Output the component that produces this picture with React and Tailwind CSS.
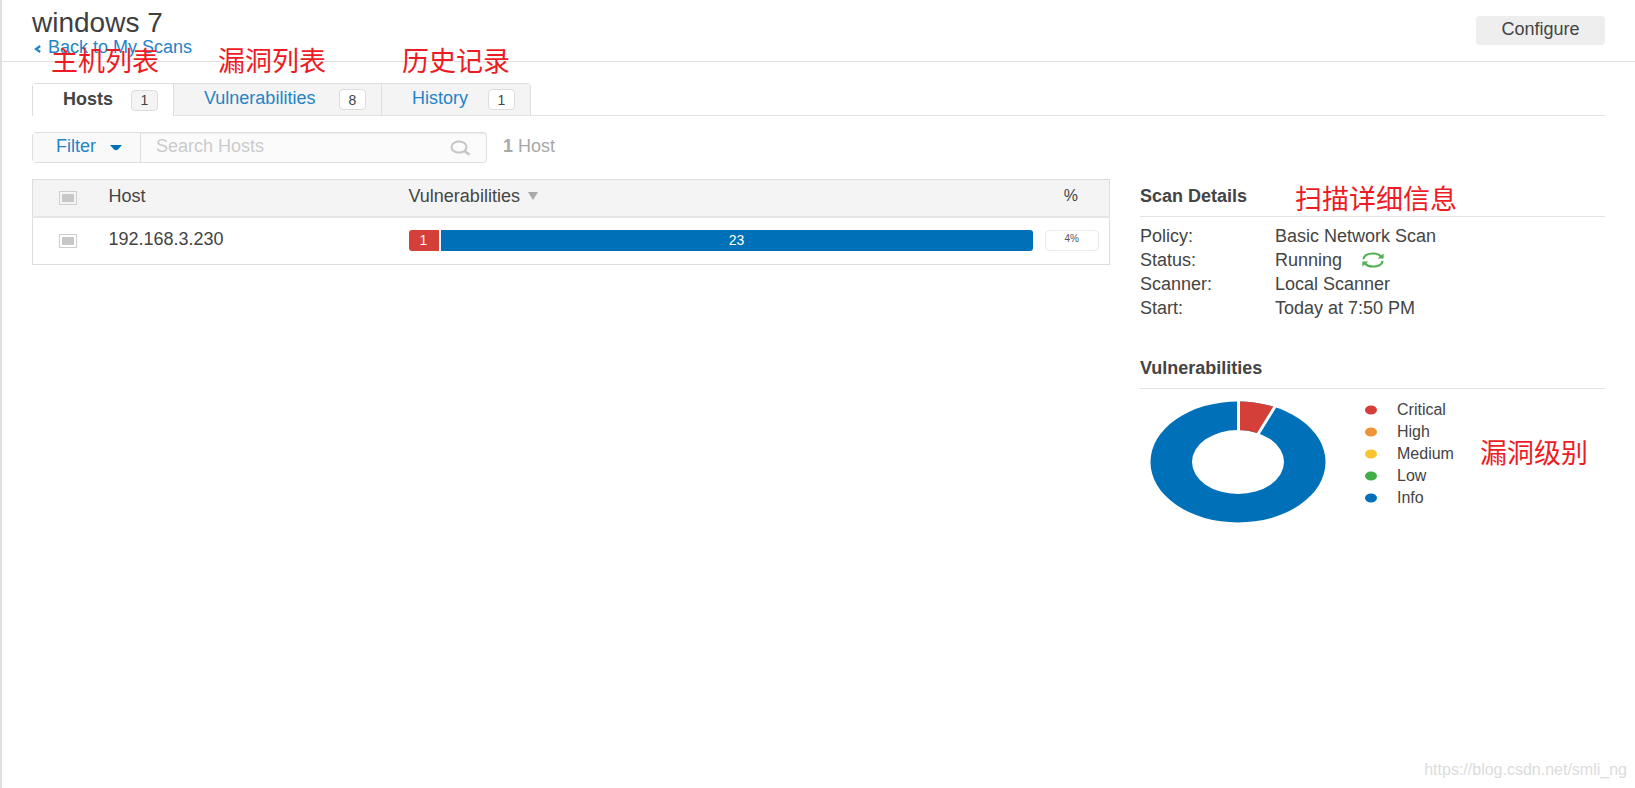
const tabs = [
  { label: 'Hosts', count: 1, active: true, width: 'w-[140px]', note: '主机列表', notePos: 'left-[18px] -top-[40px]' },
  { label: 'Vulnerabilities', count: 8, active: false, width: 'w-[207px]', note: '漏洞列表', notePos: 'left-[44px] -top-[40px]' },
  { label: 'History', count: 1, active: false, width: 'w-[148px]', note: '历史记录', notePos: 'left-[20px] -top-[40px]' },
];

const severities = [
  { label: 'Critical', fill: '#d43f3a' },
  { label: 'High', fill: '#ee9336' },
  { label: 'Medium', fill: '#fdc431' },
  { label: 'Low', fill: '#3fae49' },
  { label: 'Info', fill: '#0071b9' },
];

function Note({ className, children }) {
  return (
    <span
      className={`pointer-events-none absolute z-10 whitespace-nowrap font-['Noto_Sans_CJK_SC',sans-serif] text-[27px] leading-8 font-normal text-[#ed1c24] ${className}`}
    >
      {children}
    </span>
  );
}

function Checkbox({ label }) {
  return (
    <input
      type="checkbox"
      aria-label={label}
      className="block h-[14px] w-[18px] appearance-none border border-[#cfcfcf] bg-[#c8c8c8] bg-clip-content p-[2px]"
    />
  );
}

function RunningIcon() {
  return (
    <svg className="h-4 w-[22px]" viewBox="0 0 22 16" fill="none" stroke="#4caf50" strokeWidth="2.200" aria-hidden="true">
      <path d="M1.400 7.200C1.800 3.600 5.800 1.500 10.800 1.500c3.600 0 6.800 1.200 8.200 3.200" />
      <path d="M20.600 8.800C20.200 12.400 16.200 14.500 11.200 14.500c-3.600 0-6.800-1.200-8.200-3.200" />
      <path d="M21.600 1.400v5h-6z" fill="#4caf50" stroke="none" />
      <path d="M.4 14.600v-5h6z" fill="#4caf50" stroke="none" />
    </svg>
  );
}

function Donut() {
  return (
    <svg className="h-[122px] w-[176px]" viewBox="0 0 176 122" role="img" aria-label="Vulnerabilities by severity">
      <path
        fillRule="evenodd"
        fill="#0071b9"
        d="M88 .5a87.500 60.500 0 1 0 0 121a87.500 60.500 0 1 0 0-121zM88 29a46 32 0 1 1 0 64a46 32 0 1 1 0-64z"
      />
      <path fill="#d43f3a" d="M88 .5A87.500 60.500 0 0 1 125 6.200L108 32.300A46 32 0 0 0 88 29z" />
      <path d="M88.500 0V30" stroke="#fff" strokeWidth="3" />
      <path d="M126 4L107.500 34" stroke="#fff" strokeWidth="3" />
    </svg>
  );
}

export default function App() {
  return (
    <div className="relative min-h-screen border-l-2 border-[#e0e0e0] bg-white font-['Liberation_Sans','Noto_Sans_CJK_SC',sans-serif] text-lg leading-6 text-[#444]">
      <header className="flex h-[62px] items-start justify-between border-b border-[#e0e0e0] px-[30px]">
        <div className="pt-[7px]">
          <h1 className="text-[28px] leading-8 text-[#3f3f3f]">windows 7</h1>
          <a href="#scans" className="flex items-center gap-[6px] leading-4 text-[#2484c6]">
            <svg className="mt-[3px] ml-[2px] h-2 w-2" viewBox="0 0 8 8" fill="none" stroke="#2484c6" strokeWidth="2.200" aria-hidden="true">
              <path d="M6.200 1L2 4l4.200 3" />
            </svg>
            Back to My Scans
          </a>
        </div>
        <button type="button" className="mt-4 h-[29px] w-[129px] rounded bg-[#eee] pb-[3px] leading-6">
          Configure
        </button>
      </header>

      <div className="px-[30px] pt-[21px]">
        <nav className="flex border-b border-[#e3e3e3]">
          <div className="-mb-px flex rounded-t border border-b-0 border-[#dedede]">
            {tabs.map((t) => (
              <div key={t.label} className="relative flex border-l border-[#dedede] first:border-l-0">
                <a
                  href={`#${t.label.toLowerCase()}`}
                  className={`flex h-8 items-center justify-between pr-[15px] pl-[30px] ${t.width} ${
                    t.active ? 'bg-white font-bold' : 'border-b border-[#e3e3e3] bg-[#f4f4f4] text-[#2484c6]'
                  }`}
                >
                  <span className="pb-[3px]">{t.label}</span>
                  <span
                    className={`flex h-[21px] w-[27px] items-center justify-center rounded border border-[#dcdcdc] text-sm font-normal text-[#444] ${
                      t.active ? 'bg-[#f4f4f4]' : 'bg-white'
                    }`}
                  >
                    {t.count}
                  </span>
                </a>
                <Note className={t.notePos}>{t.note}</Note>
              </div>
            ))}
          </div>
        </nav>

        <div className="mt-4 flex items-center gap-4">
          <div className="flex h-[31px] w-[455px] rounded border border-[#dedede] bg-[#fbfbfb]">
            <button type="button" className="flex w-[108px] items-center gap-[14px] border-r border-[#dedede] bg-[#f9f9f9] pb-[3px] pl-[23px] text-[#2484c6]">
              Filter
              <svg className="mt-1 h-[6px] w-[12px]" viewBox="0 0 12 6" aria-hidden="true">
                <path d="M0 0h12L8 4.600Q6 6 4 4.600z" fill="#0071b9" />
              </svg>
            </button>
            <div className="flex flex-1 items-center px-[15px] shadow-[inset_0_1px_2px_rgba(0,0,0,0.06)]">
              <input
                type="text"
                aria-label="Search Hosts"
                placeholder="Search Hosts"
                className="min-w-0 flex-1 bg-transparent pb-[3px] outline-none placeholder:text-[#cbcbcb]"
              />
              <svg className="h-4 w-[21px]" viewBox="0 0 21 16" fill="none" stroke="#c4c4c4" strokeWidth="2" aria-hidden="true">
                <ellipse cx="9" cy="7" rx="7.500" ry="5.600" />
                <path d="M14.500 11l5 3.800" strokeWidth="2.600" />
              </svg>
            </div>
          </div>
          <p className="pb-[3px] text-[#a8a8a8]">
            <b>1</b> Host
          </p>
        </div>

        <div className="mt-4 flex items-start gap-[30px]">
          <table className="min-w-0 flex-1 table-fixed border-collapse border border-[#dedede]">
            <colgroup>
              <col className="w-[76px]" />
              <col className="w-[300px]" />
              <col />
              <col className="w-[77px]" />
            </colgroup>
            <thead className="bg-[#f4f4f4] text-left">
              <tr className="h-[37px] border-b-2 border-[#e6e6e6]">
                <th className="pl-[26px]">
                  <Checkbox label="Select all hosts" />
                </th>
                <th className="pb-1 font-normal">Host</th>
                <th className="pb-1 font-normal">
                  <span className="flex items-center gap-2">
                    Vulnerabilities
                    <svg className="h-2 w-[10px]" viewBox="0 0 10 8" aria-hidden="true">
                      <path d="M0 0h10L5 8z" fill="#aaa" />
                    </svg>
                  </span>
                </th>
                <th className="pb-1 text-center text-base font-normal">%</th>
              </tr>
            </thead>
            <tbody>
              <tr className="h-[48px]">
                <td className="pl-[26px]">
                  <Checkbox label="Select 192.168.3.230" />
                </td>
                <td className="pb-[3px]">192.168.3.230</td>
                <td>
                  <div className="flex gap-[2px] text-center text-sm leading-[21px] text-white">
                    <span className="w-[30px] rounded-l-[3px] bg-[#d43f3a]">1</span>
                    <span className="flex-1 rounded-r-[3px] bg-[#0071b9]">23</span>
                  </div>
                </td>
                <td className="pr-[10px] pl-[12px]">
                  <div className="h-[21px] rounded border border-[#ebebeb] text-center text-[10px] leading-4 text-[#555]">4%</div>
                </td>
              </tr>
            </tbody>
          </table>

          <aside className="w-[465px]">
            <section className="relative">
              <h2 className="border-b border-[#e3e3e3] pt-[5px] pb-[8px] leading-6 font-bold">Scan Details</h2>
              <Note className="top-[3px] left-[155px]">扫描详细信息</Note>
              <dl className="mt-[7px] grid grid-cols-[135px_1fr]">
                <dt>Policy:</dt>
                <dd>Basic Network Scan</dd>
                <dt>Status:</dt>
                <dd className="flex items-center gap-[20px]">
                  Running
                  <RunningIcon />
                </dd>
                <dt>Scanner:</dt>
                <dd>Local Scanner</dd>
                <dt>Start:</dt>
                <dd>Today at 7:50 PM</dd>
              </dl>
            </section>

            <section className="relative mt-[36px]">
              <h2 className="border-b border-[#e3e3e3] pb-[8px] leading-6 font-bold">Vulnerabilities</h2>
              <div className="flex items-start gap-[39px] pt-[12px] pl-[10px]">
                <Donut />
                <ul className="-mt-[2px] text-base leading-[22px]">
                  {severities.map((s) => (
                    <li key={s.label} className="flex items-center gap-[20px]">
                      <svg className="h-[10px] w-[12px]" viewBox="0 0 12 10" aria-hidden="true">
                        <ellipse cx="6" cy="5" rx="6" ry="4.600" fill={s.fill} />
                      </svg>
                      {s.label}
                    </li>
                  ))}
                </ul>
              </div>
              <Note className="top-[80px] left-[340px]">漏洞级别</Note>
            </section>
          </aside>
        </div>
      </div>

      <p className="absolute right-2 bottom-2 font-['Liberation_Sans',sans-serif] text-base leading-5 text-[#dcdcdc]">
        https://blog.csdn.net/smli_ng
      </p>
    </div>
  );
}
